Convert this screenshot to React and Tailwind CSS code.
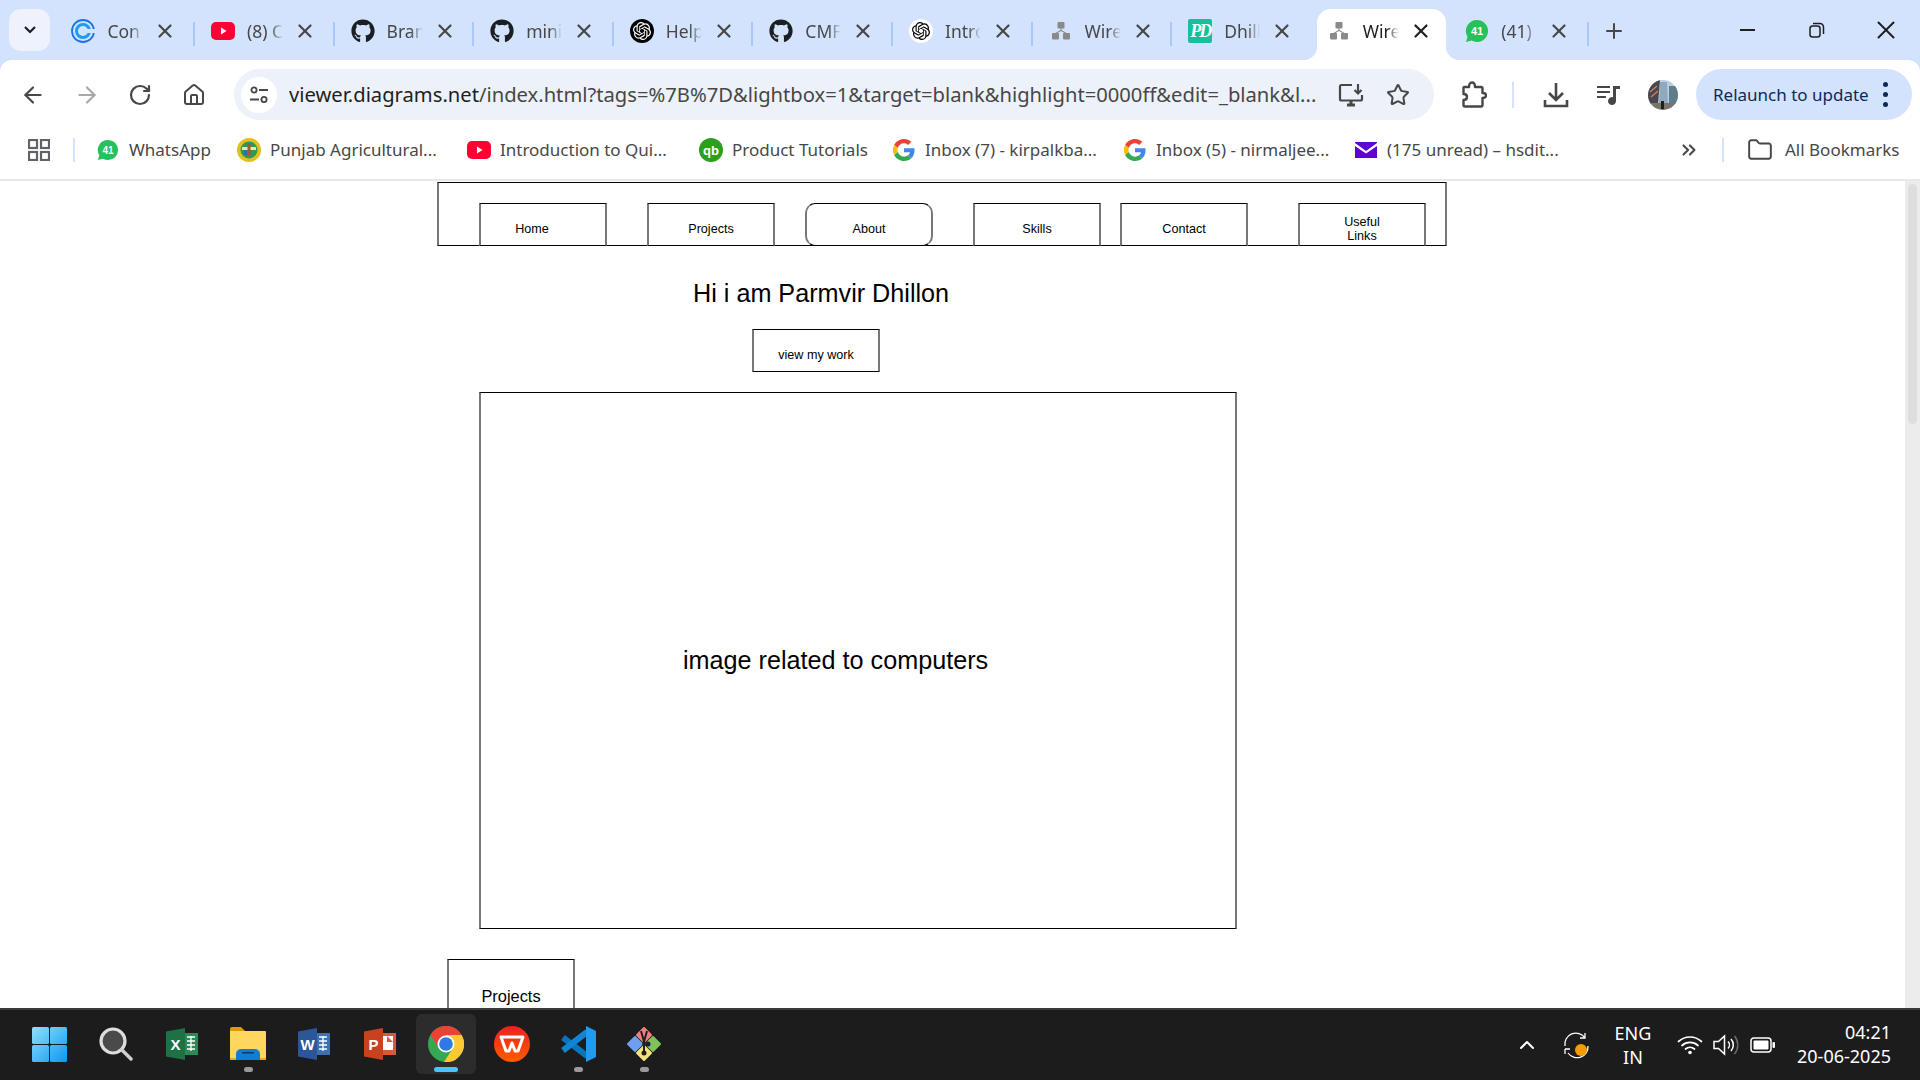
import { ArrowLeft, ArrowRight, RotateCw, House, Star, X, Plus, ChevronsRight, Folder, ChevronUp } from 'lucide-react';
import { FaGithub } from 'react-icons/fa';
import { SiOpenai } from 'react-icons/si';

const uiFont = "font-['Noto_Sans','Open_Sans',sans-serif]";

const YouTube = () => (
    <svg width="24" height="24" viewBox="0 0 24 24">
        <rect x="0" y="3" width="24" height="18" rx="5" fill="#ff0033" />
        <path d="M10 8.500l5.500 3.500-5.500 3.500z" fill="#fff" />
    </svg>
);

const WhatsApp = ({ size = 24 }) => (
    <svg width={size} height={size} viewBox="0 0 24 24">
        <path d="M12 1a11 11 0 0 1 0 22c-2 0-3.800-.5-5.400-1.400L1 23l1.500-5.300A11 11 0 0 1 12 1z" fill="#25c15a" />
        <text x="12" y="16" fontSize="11" fontWeight="700" fill="#fff" textAnchor="middle" fontFamily="Liberation Sans, sans-serif">41</text>
    </svg>
);

const Confluence = () => (
    <svg width="24" height="24" viewBox="0 0 24 24" fill="none">
        <circle cx="12" cy="12" r="11" stroke="#1a73e8" strokeWidth="1.800" />
        <circle cx="12" cy="12" r="6.500" stroke="#1e9bf0" strokeWidth="3" />
        <rect x="14" y="10" width="10" height="4" fill="#d3e3fd" />
    </svg>
);

const Openai = ({ dark }) => (
    <div className={`w-[24px] h-[24px] rounded-full flex items-center justify-center ${dark ? 'bg-black text-white' : 'bg-white text-black'}`}>
        <SiOpenai size={18} />
    </div>
);

const DrawIo = () => (
    <svg width="20" height="18" viewBox="0 0 20 18" fill="#8a8a8a">
        <rect x="6.500" y="0" width="7" height="6.500" rx="1" />
        <rect x="1" y="11" width="7" height="6.500" rx="1" />
        <rect x="12" y="11" width="7" height="6.500" rx="1" />
        <path d="M9.500 6h1v2l5 3h-2L10 9l-3.500 2h-2l5-3z" />
    </svg>
);

const PdIcon = () => (
    <div className="w-[24px] h-[24px] bg-[#19bf9b] rounded-[2px] flex items-center justify-center text-white italic font-bold text-[18px] font-['Liberation_Serif',serif] tracking-[-2px]">PD</div>
);

const tabs = [
    { icon: <Confluence />, label: 'Con' },
    { icon: <YouTube />, label: '(8) C' },
    { icon: <FaGithub size={24} color="#1b1f23" />, label: 'Bran' },
    { icon: <FaGithub size={24} color="#1b1f23" />, label: 'mini' },
    { icon: <Openai dark />, label: 'Help' },
    { icon: <FaGithub size={24} color="#1b1f23" />, label: 'CMF' },
    { icon: <Openai />, label: 'Intro' },
    { icon: <DrawIo />, label: 'Wire' },
    { icon: <PdIcon />, label: 'Dhill', noSep: true },
    { icon: <DrawIo />, label: 'Wire', active: true },
    { icon: <WhatsApp />, label: '(41)' },
];

const Tab = ({ tab }) => (
    <div className={`h-[51px] flex items-center pb-[7px] relative shrink-0 ${tab.active ? 'bg-white rounded-t-[14px] ml-[5px] mr-[3.6px] w-[129px] pl-[10px]' : 'w-[139.6px] pl-[16px]'}`}>
        {tab.active && <div className="absolute -left-[14px] bottom-0 w-[14px] h-[14px] bg-[radial-gradient(circle_at_0_0,#d3e3fd_14px,#fff_14.5px)]" />}
        {tab.active && <div className="absolute -right-[14px] bottom-0 w-[14px] h-[14px] bg-[radial-gradient(circle_at_100%_0,#d3e3fd_14px,#fff_14.5px)]" />}
        <div className="w-[24px] flex justify-center shrink-0">{tab.icon}</div>
        <div className={`ml-[12px] w-[36px] overflow-hidden whitespace-nowrap text-[17.5px] [mask-image:linear-gradient(to_right,black_65%,transparent)] ${tab.active ? 'text-[#1f1f1f]' : 'text-[#474747]'}`}>{tab.label}</div>
        <X size={22} strokeWidth={2.4} className={`ml-[11px] shrink-0 ${tab.active ? 'text-[#1f1f1f]' : 'text-[#474747]'}`} />
        {!tab.active && !tab.noSep && <div className="absolute right-0 top-[13px] w-[2px] h-[24px] bg-[#a8c7fa]" />}
    </div>
);

const GoogleG = () => (
    <svg width="22" height="22" viewBox="0 0 48 48">
        <path fill="#EA4335" d="M24 9.500c3.500 0 6.700 1.200 9.200 3.600l6.900-6.900C35.900 2.400 30.500 0 24 0 14.600 0 6.500 5.400 2.600 13.200l8 6.200C12.400 13.700 17.700 9.500 24 9.500z" />
        <path fill="#4285F4" d="M47 24.500c0-1.600-.1-3.100-.4-4.500H24v9h12.900c-.6 3-2.200 5.500-4.700 7.200l7.700 6C44.400 38.100 47 31.900 47 24.500z" />
        <path fill="#FBBC05" d="M10.500 28.600a14.500 14.500 0 0 1 0-9.200l-8-6.200a24 24 0 0 0 0 21.600z" />
        <path fill="#34A853" d="M24 48c6.500 0 11.900-2.100 15.900-5.800l-7.700-6c-2.200 1.500-4.900 2.300-8.200 2.300-6.300 0-11.600-4.200-13.500-9.900l-8 6.200C6.500 42.600 14.600 48 24 48z" />
    </svg>
);

const PauCrest = () => (
    <svg width="24" height="24" viewBox="0 0 24 24">
        <circle cx="12" cy="12" r="12" fill="#e3c01c" />
        <circle cx="12" cy="12" r="8.500" fill="#2b9a58" />
        <rect x="5" y="9" width="14" height="3" fill="#f2e9a0" />
        <rect x="7" y="12" width="3" height="5" fill="#2a6fb0" />
        <rect x="10.500" y="5" width="3" height="12" fill="#a9552f" />
    </svg>
);

const QuickBooks = () => (
    <svg width="24" height="24" viewBox="0 0 24 24">
        <circle cx="12" cy="12" r="12" fill="#2ca01c" />
        <text x="12" y="16.500" fontSize="13" fontWeight="700" fill="#fff" textAnchor="middle" fontFamily="Liberation Sans, sans-serif">qb</text>
    </svg>
);

const MailIcon = () => (
    <svg width="22" height="16" viewBox="0 0 22 16">
        <rect width="22" height="16" fill="#6001d2" />
        <path d="M0 1l11 8 11-8v3l-11 7.500L0 4z" fill="#fff" />
    </svg>
);

const bookmarks = [
    { icon: <WhatsApp size={22} />, label: 'WhatsApp', width: 'w-[141px]' },
    { icon: <PauCrest />, label: 'Punjab Agricultural...', width: 'w-[230px]' },
    { icon: <YouTube />, label: 'Introduction to Qui...', width: 'w-[232px]' },
    { icon: <QuickBooks />, label: 'Product Tutorials', width: 'w-[193px]' },
    { icon: <GoogleG />, label: 'Inbox (7) - kirpalkba...', width: 'w-[231px]' },
    { icon: <GoogleG />, label: 'Inbox (5) - nirmaljee...', width: 'w-[231px]' },
    { icon: <MailIcon />, label: '(175 unread) \u2013 hsdit...', width: 'w-[328px]' },
];

const AppsGrid = () => (
    <svg width="22" height="22" viewBox="0 0 22 22" fill="none" stroke="#5f6368" strokeWidth="2.200">
        <rect x="1" y="1" width="8" height="8" />
        <rect x="13" y="1" width="8" height="8" />
        <rect x="1" y="13" width="8" height="8" />
        <rect x="13" y="13" width="8" height="8" />
    </svg>
);

const InstallIcon = () => (
    <svg width="26" height="26" viewBox="0 0 26 26" fill="none" stroke="#474747" strokeWidth="2.200">
        <path d="M14 3H3.500a1.500 1.500 0 0 0-1.500 1.500V17a1.500 1.500 0 0 0 1.500 1.500h19A1.500 1.500 0 0 0 24 17v-4" />
        <path d="M9 23h8M13 19v4" strokeWidth="3" />
        <path d="M20 2v9M16.500 8l3.500 3.500L23.500 8" />
    </svg>
);

const PuzzleIcon = () => (
    <svg width="26" height="28" viewBox="0 0 26 28" fill="none" stroke="#474747" strokeWidth="2.400" strokeLinejoin="round">
        <path d="M3 6h5c0-3 1-4.500 3-4.500S14 3 14 6h6a1.500 1.500 0 0 1 1.500 1.500V12c2.500 0 3.500 1 3.500 2.500S24 17 21.500 17v7a1.500 1.500 0 0 1-1.500 1.500H4A1.500 1.500 0 0 1 2.500 24v-5c2.500 0 3.500-1.500 3.500-3S5 13 2.500 13V7.500A1.500 1.500 0 0 1 3 6z" />
    </svg>
);

const DownloadIcon = () => (
    <svg width="26" height="28" viewBox="0 0 26 28" fill="none" stroke="#474747" strokeWidth="2.600">
        <path d="M13 2v16M6 12l7 7 7-7" />
        <path d="M2 19v6h22v-6" />
    </svg>
);

const MediaIcon = () => (
    <svg width="24" height="22" viewBox="0 0 24 22" fill="#474747">
        <rect x="0" y="2" width="13" height="2" />
        <rect x="0" y="7" width="13" height="2" />
        <rect x="0" y="12" width="9" height="2" />
        <path d="M16 2h7v3h-4v12a4 4 0 1 1-3-3.800z" />
    </svg>
);

const SiteInfoIcon = () => (
    <svg width="20" height="20" viewBox="0 0 20 20" fill="none" stroke="#474747" strokeWidth="1.800">
        <circle cx="5" cy="5" r="2.600" />
        <path d="M10 5h9M1 14.500h9" />
        <circle cx="15" cy="14.500" r="2.600" />
    </svg>
);

const Avatar = () => (
    <svg width="30" height="30" viewBox="0 0 30 30">
        <defs>
            <clipPath id="avatarClip"><circle cx="15" cy="15" r="15" /></clipPath>
        </defs>
        <g clipPath="url(#avatarClip)">
            <rect width="30" height="30" fill="#b9d0e2" />
            <path d="M0 0h12l-2 24H0z" fill="#4a4650" />
            <path d="M12 2h7l1 22h-9z" fill="#8fa9bd" />
            <path d="M21 6h9v18h-9z" fill="#5f7d8a" />
            <rect x="0" y="23" width="30" height="7" fill="#7a736a" />
            <rect x="13" y="21" width="3" height="8" fill="#1d1d22" />
            <path d="M2 12l7-6M3 17l7-6" stroke="#c9814f" strokeWidth="1.500" />
        </g>
    </svg>
);

const RestoreIcon = () => (
    <svg width="16" height="16" viewBox="0 0 16 16" fill="none" stroke="#1f1f1f" strokeWidth="1.500">
        <rect x="1" y="4" width="10" height="11" rx="2.500" />
        <path d="M4 1.500h7A3.500 3.500 0 0 1 14.500 5v7" />
    </svg>
);

const WindowsLogo = () => (
    <svg width="35" height="35" viewBox="0 0 35 35">
        <defs>
            <linearGradient id="winGrad" gradientUnits="userSpaceOnUse" x1="0" y1="0" x2="35" y2="35">
                <stop offset="0" stopColor="#8fe0fa" />
                <stop offset="1" stopColor="#0c98f2" />
            </linearGradient>
        </defs>
        <rect x="0" y="0" width="17" height="17" rx="1.500" fill="url(#winGrad)" />
        <rect x="18" y="0" width="17" height="17" rx="1.500" fill="url(#winGrad)" />
        <rect x="0" y="18" width="17" height="17" rx="1.500" fill="url(#winGrad)" />
        <rect x="18" y="18" width="17" height="17" rx="1.500" fill="url(#winGrad)" />
    </svg>
);

const SearchLogo = () => (
    <svg width="34" height="35" viewBox="0 0 34 35" fill="none">
        <circle cx="14" cy="14" r="12" fill="#4a4a4a" stroke="#dedede" strokeWidth="3.200" />
        <path d="M23 23l9 9" stroke="#cfcfcf" strokeWidth="3.500" strokeLinecap="round" />
    </svg>
);

const OfficeLogo = ({ color, light, letter }) => (
    <svg width="32" height="32" viewBox="0 0 32 32">
        <rect x="18" y="5" width="14" height="22" fill={light} />
        <path d="M21 9h8M21 13h8M21 17h8M21 21h8M25 8v15" stroke="#fff" strokeWidth="1.300" />
        <path d="M0 3.500L19 0v32L0 28.500z" fill={color} />
        <text x="9.500" y="22" fontSize="15" fontWeight="700" fill="#fff" textAnchor="middle" fontFamily="Liberation Sans, sans-serif">{letter}</text>
    </svg>
);

const PptLogo = () => (
    <svg width="32" height="32" viewBox="0 0 32 32">
        <rect x="16" y="5" width="16" height="22" fill="#d9583b" />
        <rect x="19" y="8" width="10" height="14" fill="#fff" />
        <path d="M23 8v6h6z" fill="#d9583b" />
        <path d="M0 3.500L19 0v32L0 28.500z" fill="#c8421f" />
        <text x="9.500" y="22" fontSize="15" fontWeight="700" fill="#fff" textAnchor="middle" fontFamily="Liberation Sans, sans-serif">P</text>
    </svg>
);

const FolderLogo = () => (
    <svg width="36" height="34" viewBox="0 0 36 34">
        <path d="M0 2a2 2 0 0 1 2-2h9l4 4H0z" fill="#d99a0c" />
        <path d="M0 4h35a1 1 0 0 1 1 1v28H0z" fill="#ffd75e" />
        <path d="M0 31h36v2H0z" fill="#e8a91c" />
        <path d="M6 33h24v-6a5 5 0 0 0-5-5H11a5 5 0 0 0-5 5z" fill="#0f7fd6" />
        <rect x="12" y="25" width="12" height="1.500" fill="#073c6e" />
    </svg>
);

const ChromeLogo = () => (
    <svg width="36" height="36" viewBox="0 0 36 36">
        <circle cx="18" cy="18" r="18" fill="#34a853" />
        <path d="M33.600 9A18 18 0 0 1 16 36L25 22 18 9z" fill="#fcc934" />
        <path d="M2.400 9A18 18 0 0 1 33.600 9H18L11 22z" fill="#ea4335" />
        <circle cx="18" cy="18" r="8.500" fill="#fff" />
        <circle cx="18" cy="18" r="6.800" fill="#2f78e8" />
    </svg>
);

const WpsLogo = () => (
    <svg width="36" height="36" viewBox="0 0 36 36">
        <defs>
            <linearGradient id="wpsGrad" x1="0" y1="0" x2="0" y2="1">
                <stop offset="0" stopColor="#ee1f1f" />
                <stop offset="1" stopColor="#ff5c00" />
            </linearGradient>
        </defs>
        <circle cx="18" cy="18" r="18" fill="url(#wpsGrad)" />
        <path d="M7 11h22l-5 14h-3l-3-8-3 8h-3z" fill="none" stroke="#fff" strokeWidth="3" strokeLinejoin="round" />
    </svg>
);

const VsCodeLogo = () => (
    <svg width="36" height="36" viewBox="0 0 36 36" fill="none">
        <path d="M3 11.500L27 30" stroke="#0a74bd" strokeWidth="6" />
        <path d="M3 24.500L27 6" stroke="#0e86d4" strokeWidth="6" />
        <path d="M26 0l10 5v26l-10 5z" fill="#1f9cf0" />
    </svg>
);

const GitLogo = () => (
    <svg width="36" height="36" viewBox="0 0 36 36" strokeLinejoin="round" strokeWidth="2">
        <path d="M18 2l7 7-7 7-7-7z" fill="#ef7f7f" stroke="#ef7f7f" />
        <path d="M27 11l7 7-7 7-7-7z" fill="#7ec35b" stroke="#7ec35b" />
        <path d="M9 11l7 7-7 7-7-7z" fill="#6f9ff0" stroke="#6f9ff0" />
        <path d="M18 20l7 7-7 7-7-7z" fill="#f6e27a" stroke="#f6e27a" />
        <path d="M15 5l4 14M21 5l-4 14M18 19v7" stroke="#1f1f1f" fill="none" />
        <circle cx="22" cy="18" r="2.500" fill="#1f1f1f" />
        <circle cx="18" cy="27" r="2.500" fill="#1f1f1f" />
    </svg>
);

const taskbarApps = [
    { icon: <WindowsLogo />, width: 'w-[68px]' },
    { icon: <SearchLogo />, width: 'w-[66px]' },
    { icon: <OfficeLogo color="#1e7145" light="#2d8a57" letter="X" />, width: 'w-[66px]' },
    { icon: <FolderLogo />, dot: true, width: 'w-[66px]' },
    { icon: <OfficeLogo color="#2b579a" light="#3f6fb5" letter="W" />, width: 'w-[66px]' },
    { icon: <PptLogo />, width: 'w-[66px]' },
    { icon: <ChromeLogo />, active: true, width: 'w-[66px]' },
    { icon: <WpsLogo />, width: 'w-[66px]' },
    { icon: <VsCodeLogo />, dot: true, width: 'w-[66px]' },
    { icon: <GitLogo />, dot: true, width: 'w-[66px]' },
];

const SyncIcon = () => (
    <svg width="28" height="28" viewBox="0 0 28 28" fill="none" stroke="#fff" strokeWidth="1.300">
        <path d="M2 15A11 11 0 0 1 22 7M22 2v5h-5" />
        <path d="M25 15A11 11 0 0 1 5 22M2 18h5M2 18v5" />
        <circle cx="18" cy="19" r="6" fill="#f59c00" stroke="none" />
    </svg>
);

const WifiIcon = () => (
    <svg width="26" height="20" viewBox="0 0 26 20" fill="none" stroke="#fff" strokeWidth="1.700" strokeLinecap="round">
        <path d="M1.500 6.500a17 17 0 0 1 23 0M5 10.500a12 12 0 0 1 16 0M8.500 14a7 7 0 0 1 9 0" />
        <circle cx="13" cy="17.500" r="1.800" fill="#fff" stroke="none" />
    </svg>
);

const VolumeIcon = () => (
    <svg width="26" height="22" viewBox="0 0 26 22" fill="none" stroke="#fff" strokeWidth="1.500">
        <path d="M1 7.500h4.500L11.500 2v18l-6-5.500H1z" />
        <path d="M15 7.500a5 5 0 0 1 0 7M18 5a9 9 0 0 1 0 12" />
        <path d="M21.500 2a14 14 0 0 1 0 18" stroke="#6b6b6b" />
    </svg>
);

const BatteryIcon = () => (
    <svg width="26" height="16" viewBox="0 0 26 16" fill="none">
        <rect x="1" y="1" width="20" height="14" rx="3" stroke="#fff" strokeWidth="1.500" />
        <rect x="3.500" y="3.500" width="15" height="9" rx="1" fill="#fff" />
        <rect x="22.500" y="5" width="2.500" height="6" rx="1" fill="#fff" />
    </svg>
);

// wireframe nodes sit on the diagram canvas, so they keep their canvas coordinates
const nodeBorder = 'border-y border-y-black border-x-2 border-x-[#777]';

const navBoxes = [
    { label: 'Home', pos: 'left-[479px] pr-[22px]' },
    { label: 'Projects', pos: 'left-[647px]' },
    { label: 'About', pos: 'left-[805px] rounded-[10px]' },
    { label: 'Skills', pos: 'left-[973px]' },
    { label: 'Contact', pos: 'left-[1120px]' },
    { label: 'Useful Links', pos: 'left-[1298px] px-[40px]' },
];

export default function App() {
    return (
        <div className={`w-[1920px] h-[1080px] flex flex-col overflow-hidden bg-white ${uiFont}`}>
            {/* Tab strip */}
            <div className="h-[60px] bg-[#d3e3fd] flex items-end shrink-0 relative">
                <div className="w-[41px] h-[42px] ml-[9px] mb-[9px] mr-[5.4px] bg-[#edf2fc] rounded-[12px] flex items-center justify-center shrink-0">
                    <svg width="14" height="10" viewBox="0 0 14 10" fill="none" stroke="#1f1f1f" strokeWidth="2.200"><path d="M2 2l5 5 5-5" /></svg>
                </div>
                {tabs.map((tab, i) => <Tab key={i} tab={tab} />)}
                <div className="h-[51px] flex items-center ml-[13px] pb-[7px]">
                    <Plus size={24} strokeWidth={2} className="text-[#474747]" />
                </div>
                <div className="ml-auto h-full flex items-center">
                    <div className="w-[69px] flex justify-center"><div className="w-[15px] h-[2px] bg-[#1f1f1f]" /></div>
                    <div className="w-[69px] flex justify-center"><RestoreIcon /></div>
                    <div className="w-[69px] flex justify-center"><X size={30} strokeWidth={1.6} className="text-[#1f1f1f]" /></div>
                </div>
            </div>

            {/* Toolbar */}
            <div className="h-[60px] bg-[#d3e3fd] shrink-0">
                <div className="h-full bg-white rounded-t-[12px] flex items-center pt-[9px] pl-[20px]">
                    <div className="w-[54px]"><ArrowLeft size={26} strokeWidth={2} className="text-[#474747]" /></div>
                    <div className="w-[54px]"><ArrowRight size={26} strokeWidth={2} className="text-[#a9a9a9]" /></div>
                    <div className="w-[54px]"><RotateCw size={24} strokeWidth={2.2} className="text-[#474747]" /></div>
                    <div className="w-[52px]"><House size={24} strokeWidth={2} className="text-[#474747]" /></div>
                    <div className="w-[1200px] h-[51px] bg-[#edf2fa] rounded-full flex items-center pl-[7px] pr-[24px]">
                        <div className="w-[36px] h-[36px] rounded-full bg-white flex items-center justify-center shrink-0"><SiteInfoIcon /></div>
                        <div className="ml-[12px] text-[20.2px] whitespace-nowrap overflow-hidden text-[#474747] flex-1">
                            <span className="text-[#1f1f1f]">viewer.diagrams.net</span>/index.html?tags=%7B%7D&amp;lightbox=1&amp;target=blank&amp;highlight=0000ff&amp;edit=_blank&amp;l...
                        </div>
                        <div className="ml-[12px] shrink-0"><InstallIcon /></div>
                        <Star size={24} strokeWidth={2} className="ml-[22px] text-[#474747] shrink-0" />
                    </div>
                    <div className="ml-[27px]"><PuzzleIcon /></div>
                    <div className="ml-[25px] w-[2px] h-[26px] bg-[#d3e3fd]" />
                    <div className="ml-[29px]"><DownloadIcon /></div>
                    <div className="ml-[28px]"><MediaIcon /></div>
                    <div className="ml-[27px]"><Avatar /></div>
                    <div className="ml-[18px] w-[216px] h-[51px] rounded-full bg-[#d3e3fd] flex items-center pl-[17px] text-[17px] text-[#0b2a5c]">
                        <span className="whitespace-nowrap">Relaunch to update</span>
                        <div className="ml-[14px] flex flex-col gap-[5px]">
                            <div className="w-[5px] h-[5px] rounded-full bg-[#0b2a5c]" />
                            <div className="w-[5px] h-[5px] rounded-full bg-[#0b2a5c]" />
                            <div className="w-[5px] h-[5px] rounded-full bg-[#0b2a5c]" />
                        </div>
                    </div>
                </div>
            </div>

            {/* Bookmarks bar */}
            <div className="h-[61px] shrink-0 border-b-2 border-[#e8e8e8] flex items-center pl-[28px]">
                <AppsGrid />
                <div className="ml-[23px] mr-[21px] w-[2px] h-[24px] bg-[#d3e3fd]" />
                {bookmarks.map((b) => (
                    <div key={b.label} className={`flex items-center shrink-0 ${b.width}`}>
                        <div className="w-[24px] flex justify-center">{b.icon}</div>
                        <span className="ml-[9px] text-[17px] text-[#474747] whitespace-nowrap">{b.label}</span>
                    </div>
                ))}
                <ChevronsRight size={22} strokeWidth={2.2} className="text-[#474747] -ml-[4px]" />
                <div className="ml-[22px] w-[2px] h-[24px] bg-[#d3e3fd]" />
                <Folder size={26} strokeWidth={1.8} className="ml-[23px] text-[#474747]" />
                <span className="ml-[12px] text-[17px] text-[#474747] whitespace-nowrap">All Bookmarks</span>
            </div>

            {/* Page */}
            <div className="flex-1 flex min-h-0">
                <div className="flex-1 relative overflow-hidden text-black font-['Liberation_Sans',Arial,sans-serif]">
                    <div className={`absolute left-[437px] top-[1px] w-[1010px] h-[64px] ${nodeBorder}`} />
                    {navBoxes.map((n) => (
                        <div key={n.label} className={`absolute top-[22px] w-[128px] h-[43px] bg-white pt-[8px] flex items-center justify-center text-center text-[12.6px] leading-[14px] ${nodeBorder} ${n.pos}`}>
                            {n.label}
                        </div>
                    ))}
                    <div className="absolute left-[693px] top-[98px] text-[25.2px] leading-[28px] whitespace-nowrap">Hi i am Parmvir Dhillon</div>
                    <div className={`absolute left-[752px] top-[148px] w-[128px] h-[43px] pt-[10px] flex items-center justify-center text-[12.6px] ${nodeBorder}`}>view my work</div>
                    <div className={`absolute left-[479px] top-[211px] w-[758px] h-[537px] ${nodeBorder}`} />
                    <div className="absolute left-[683px] top-[465px] text-[25.2px] leading-[28px] whitespace-nowrap">image related to computers</div>
                    <div className={`absolute left-[447px] top-[778px] w-[128px] h-[60px] flex items-start justify-center pt-[27px] text-[16.4px] leading-[18px] ${nodeBorder}`}>Projects</div>
                </div>
                <div className="w-[15px] shrink-0 bg-[#ececec] flex flex-col items-center pt-[3px]">
                    <div className="w-[9px] h-[240px] bg-[#dedede] rounded-full" />
                </div>
            </div>

            {/* Taskbar */}
            <div className="h-[72px] shrink-0 bg-[#1c1c1c] border-t-2 border-[#3a3a3a] flex items-center pl-[15px] text-white">
                {taskbarApps.map((app, i) => (
                    <div key={i} className={`h-[60px] mb-[2px] flex items-center justify-center relative shrink-0 ${app.width}`}>
                        {app.active && <div className="absolute inset-y-0 inset-x-[3px] bg-[#2c2c2c] rounded-[6px]" />}
                        <div className="relative flex">{app.icon}</div>
                        {app.dot && <div className="absolute bottom-[2px] w-[9px] h-[5px] rounded-full bg-[#9a9a9a]" />}
                        {app.active && <div className="absolute bottom-[2px] w-[24px] h-[5px] rounded-full bg-[#4cc2ff]" />}
                    </div>
                ))}
                <ChevronUp size={24} strokeWidth={2} className="ml-[838px]" />
                <div className="ml-[24px]"><SyncIcon /></div>
                <div className="ml-[23px] w-[38px] text-center text-[18px] leading-[24px]"><div>ENG</div><div>IN</div></div>
                <div className="ml-[25px]"><WifiIcon /></div>
                <div className="ml-[10px]"><VolumeIcon /></div>
                <div className="ml-[11px]"><BatteryIcon /></div>
                <div className="ml-[21px] mb-[3px] text-right text-[18px] leading-[24px] w-[94px]"><div>04:21</div><div>20-06-2025</div></div>
            </div>
        </div>
    );
}
